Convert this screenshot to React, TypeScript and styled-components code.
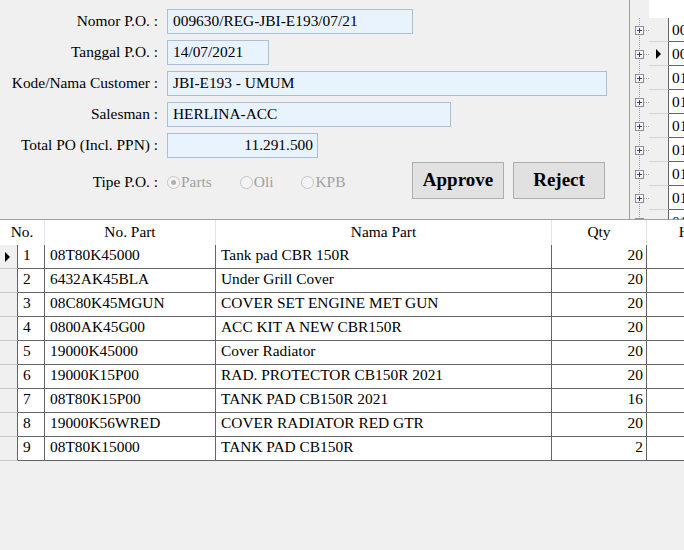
import React from 'react';
import styled, { createGlobalStyle } from 'styled-components';

const Global = createGlobalStyle`
  html, body { margin: 0; padding: 0; background: #f0f0f0; }
  body {
    font-family: "Liberation Serif", "Times New Roman", serif;
    font-size: 15.4px;
    color: #000;
  }
  * { box-sizing: border-box; }
`;

const Page = styled.div`
  width: 684px;
  height: 550px;
  overflow: hidden;
  background: #f0f0f0;
  display: flex;
  flex-direction: column;
`;

const Top = styled.div`
  height: 220px;
  flex: none;
  border-bottom: 1px solid #a0a0a0;
  display: flex;
`;

const Form = styled.div`
  width: 629px;
  flex: none;
  padding-top: 9px;
  display: flex;
  flex-direction: column;
  gap: 6px;
`;

const FieldRow = styled.div`
  display: flex;
  align-items: center;
  height: 25px;
`;

const Label = styled.div`
  width: 158px;
  flex: none;
  text-align: right;
  margin-right: 9px;
  white-space: nowrap;
  padding-bottom: 2px;
`;

const Input = styled.div<{ $w: number; $right?: boolean }>`
  width: ${(p) => p.$w}px;
  height: 25px;
  border: 1px solid #a9bfd8;
  background: #e9f3fd;
  padding: 0 4px 2px 5px;
  display: flex;
  align-items: center;
  justify-content: ${(p) => (p.$right ? 'flex-end' : 'flex-start')};
  white-space: nowrap;
  overflow: hidden;
`;

const TypeRow = styled.div`
  display: flex;
  align-items: center;
  height: 36px;
  margin-top: -2px;
  padding-right: 24px;
`;

const TypeLabel = styled(Label)`
  padding-top: 3px;
  padding-bottom: 0;
`;

const RadioGroup = styled.div`
  display: flex;
  align-items: center;
  gap: 28px;
  padding-top: 4px;
`;

const RadioOption = styled.div`
  display: flex;
  align-items: center;
  color: #a0a0a0;
  gap: 1px;
`;

const RadioCircle = styled.span<{ $checked?: boolean }>`
  width: 13px;
  height: 13px;
  border-radius: 50%;
  border: 1px solid #c4c4c4;
  background: #f4f4f4;
  display: flex;
  align-items: center;
  justify-content: center;
  &::after {
    content: '';
    width: 5px;
    height: 5px;
    border-radius: 50%;
    background: ${(p) => (p.$checked ? '#b0b0b0' : 'transparent')};
  }
`;

const Buttons = styled.div`
  margin-left: auto;
  display: flex;
  gap: 9px;
`;

const Button = styled.button`
  width: 92px;
  height: 37px;
  border: 1px solid #adadad;
  background: #e1e1e1;
  font-family: "Liberation Serif", "Times New Roman", serif;
  font-weight: bold;
  font-size: 19px;
  color: #000;
  padding: 0;
  padding-bottom: 1px;
`;

const Side = styled.div`
  flex: 1;
  border-left: 1px solid #a0a0a0;
  display: flex;
  overflow: hidden;
`;

const TreeCol = styled.div`
  width: 19px;
  flex: none;
  display: flex;
  flex-direction: column;
  padding-top: 18px;
`;

const TreeCell = styled.div`
  height: 24px;
  flex: none;
`;

const MiniGrid = styled.div`
  flex: 1;
  background: #fff;
  display: flex;
  flex-direction: column;
  padding-top: 18px;
  overflow: hidden;
`;

const MiniRow = styled.div`
  display: flex;
  height: 24px;
  flex: none;
`;

const MiniHead = styled.div`
  width: 20px;
  flex: none;
  background: #f0f0f0;
  border-right: 1px solid #646464;
  border-bottom: 1px solid #d6d6d6;
  display: flex;
  align-items: center;
  justify-content: center;
`;

const MiniCell = styled.div`
  flex: 1;
  border-bottom: 1px solid #646464;
  padding-left: 3px;
  display: flex;
  align-items: center;
  white-space: nowrap;
`;

const Arrow = styled.span`
  width: 0;
  height: 0;
  border-top: 5px solid transparent;
  border-bottom: 5px solid transparent;
  border-left: 5px solid #000;
`;

const Table = styled.div`
  display: flex;
  flex-direction: column;
  width: 760px;
`;

const HeadRow = styled.div`
  display: flex;
  height: 25px;
  background: #fff;
`;

const HeadCell = styled.div<{ $w: number }>`
  width: ${(p) => p.$w}px;
  flex: none;
  border-right: 1px solid #e2e2e2;
  display: flex;
  align-items: center;
  justify-content: center;
  white-space: nowrap;
  padding-bottom: 1px;
`;

const BodyRow = styled.div`
  display: flex;
  height: 24px;
`;

const Indicator = styled.div`
  width: 18px;
  flex: none;
  background: #f0f0f0;
  border-right: 1px solid #646464;
  border-bottom: 1px solid #c8c8c8;
  display: flex;
  align-items: center;
  padding-left: 5px;
`;

const Cell = styled.div<{ $w: number; $right?: boolean }>`
  width: ${(p) => p.$w}px;
  flex: none;
  background: #fff;
  border-right: 1px solid #646464;
  border-bottom: 1px solid #646464;
  display: flex;
  align-items: center;
  justify-content: ${(p) => (p.$right ? 'flex-end' : 'flex-start')};
  padding: ${(p) => (p.$right ? '0 3px 3px 0' : '0 0 3px 5px')};
  white-space: nowrap;
  overflow: hidden;
`;

const TreeNode = () => (
  <svg width="19" height="24" viewBox="0 0 19 24">
    <line x1="9.5" y1="0" x2="9.5" y2="24" stroke="#a0a0a0" strokeDasharray="1 1" />
    <line x1="14" y1="12.5" x2="19" y2="12.5" stroke="#a0a0a0" strokeDasharray="1 1" />
    <rect x="5.5" y="8.5" width="8" height="8" fill="#f7f7f7" stroke="#8e8f8f" />
    <line x1="7" y1="12.5" x2="12" y2="12.5" stroke="#2b3f8c" />
    <line x1="9.5" y1="10" x2="9.5" y2="15" stroke="#2b3f8c" />
  </svg>
);

const miniValues = ['00', '00', '01', '01', '01', '01', '01', '01', '01'];

const rows = [
  ['1', '08T80K45000', 'Tank pad CBR 150R', '20'],
  ['2', '6432AK45BLA', 'Under Grill Cover', '20'],
  ['3', '08C80K45MGUN', 'COVER SET ENGINE MET GUN', '20'],
  ['4', '0800AK45G00', 'ACC KIT A NEW CBR150R', '20'],
  ['5', '19000K45000', 'Cover Radiator', '20'],
  ['6', '19000K15P00', 'RAD. PROTECTOR CB150R 2021', '20'],
  ['7', '08T80K15P00', 'TANK PAD CB150R 2021', '16'],
  ['8', '19000K56WRED', 'COVER RADIATOR RED GTR', '20'],
  ['9', '08T80K15000', 'TANK PAD CB150R', '2'],
];

export default function App() {
  return (
    <Page>
      <Global />
      <Top>
        <Form>
          <FieldRow>
            <Label>Nomor P.O. :</Label>
            <Input $w={246}>009630/REG-JBI-E193/07/21</Input>
          </FieldRow>
          <FieldRow>
            <Label>Tanggal P.O. :</Label>
            <Input $w={102}>14/07/2021</Input>
          </FieldRow>
          <FieldRow>
            <Label>Kode/Nama Customer :</Label>
            <Input $w={440}>JBI-E193 - UMUM</Input>
          </FieldRow>
          <FieldRow>
            <Label>Salesman :</Label>
            <Input $w={284}>HERLINA-ACC</Input>
          </FieldRow>
          <FieldRow>
            <Label>Total PO (Incl. PPN) :</Label>
            <Input $w={151} $right>11.291.500</Input>
          </FieldRow>
          <TypeRow>
            <TypeLabel>Tipe P.O. :</TypeLabel>
            <RadioGroup>
              <RadioOption>
                <RadioCircle $checked />
                Parts
              </RadioOption>
              <RadioOption>
                <RadioCircle />
                Oli
              </RadioOption>
              <RadioOption>
                <RadioCircle />
                KPB
              </RadioOption>
            </RadioGroup>
            <Buttons>
              <Button>Approve</Button>
              <Button>Reject</Button>
            </Buttons>
          </TypeRow>
        </Form>
        <Side>
          <TreeCol>
            {miniValues.map((_, i) => (
              <TreeCell key={i}>
                <TreeNode />
              </TreeCell>
            ))}
          </TreeCol>
          <MiniGrid>
            {miniValues.map((v, i) => (
              <MiniRow key={i}>
                <MiniHead>{i === 1 && <Arrow />}</MiniHead>
                <MiniCell>{v}</MiniCell>
              </MiniRow>
            ))}
          </MiniGrid>
        </Side>
      </Top>
      <Table>
        <HeadRow>
          <HeadCell $w={45}>No.</HeadCell>
          <HeadCell $w={171}>No. Part</HeadCell>
          <HeadCell $w={336}>Nama Part</HeadCell>
          <HeadCell $w={95}>Qty</HeadCell>
          <HeadCell $w={102}>Harga</HeadCell>
        </HeadRow>
        {rows.map((r, i) => (
          <BodyRow key={r[0]}>
            <Indicator>{i === 0 && <Arrow />}</Indicator>
            <Cell $w={27}>{r[0]}</Cell>
            <Cell $w={171}>{r[1]}</Cell>
            <Cell $w={336}>{r[2]}</Cell>
            <Cell $w={95} $right>
              {r[3]}
            </Cell>
            <Cell $w={102} $right></Cell>
          </BodyRow>
        ))}
      </Table>
    </Page>
  );
}
